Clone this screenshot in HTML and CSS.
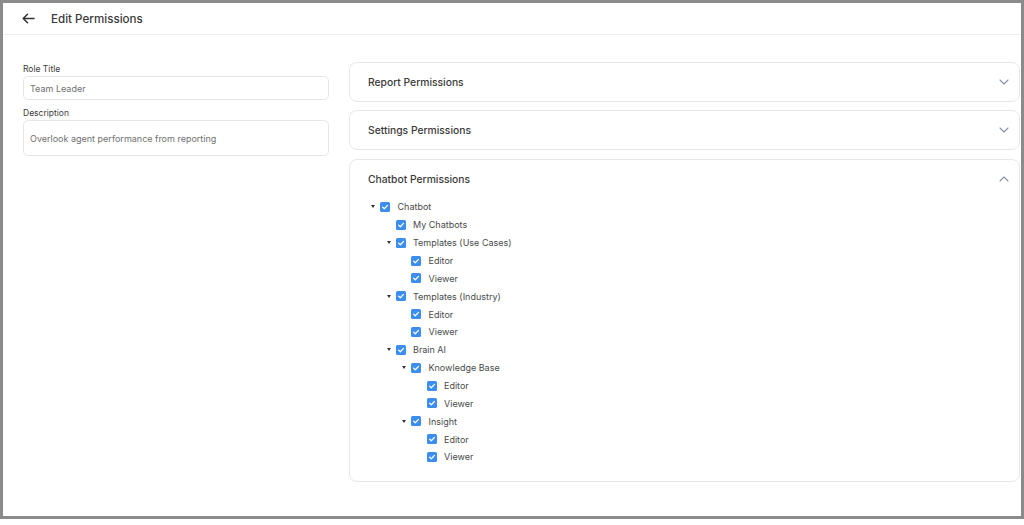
FILE: index.html
```html
<!DOCTYPE html>
<html>
<head>
  <meta charset="utf-8">
  <title>Edit Permissions</title>
  <link rel="stylesheet" href="styles.css">
</head>
<body>
  <div class="frame">
    <div class="header">
      <button class="back-button" aria-label="Back">
        <svg width="13" height="11" viewBox="0 0 13 11" fill="none" stroke="#333" stroke-width="1.5" stroke-linecap="round" stroke-linejoin="round">
          <path d="M12 5.5H1.5M5.5 1.2L1.2 5.5l4.3 4.3"/>
        </svg>
      </button>
      <h1>Edit Permissions</h1>
    </div>

    <div class="content">
      <div class="role-form">
        <label class="field-label">Role Title</label>
        <div class="field-input">Team Leader</div>
        <label class="field-label">Description</label>
        <div class="field-input field-textarea">Overlook agent performance from reporting</div>
      </div>

      <div class="permission-list">
        <div class="perm-card">
          <div class="perm-header">
            <span>Report Permissions</span>
            <svg class="chevron" width="10" height="6" viewBox="0 0 10 6"><path d="M1 1l4 4 4-4"/></svg>
          </div>
        </div>
        <div class="perm-card">
          <div class="perm-header">
            <span>Settings Permissions</span>
            <svg class="chevron" width="10" height="6" viewBox="0 0 10 6"><path d="M1 1l4 4 4-4"/></svg>
          </div>
        </div>
        <div class="perm-card open">
          <div class="perm-header">
            <span>Chatbot Permissions</span>
            <svg class="chevron" width="10" height="6" viewBox="0 0 10 6"><path d="M1 5l4-4 4 4"/></svg>
          </div>
          <ul class="tree" id="tree"></ul>
        </div>
      </div>
    </div>
  </div>

  <script>
    const nodes = [
      ['Chatbot', 0, true],
      ['My Chatbots', 1, false],
      ['Templates (Use Cases)', 1, true],
      ['Editor', 2, false],
      ['Viewer', 2, false],
      ['Templates (Industry)', 1, true],
      ['Editor', 2, false],
      ['Viewer', 2, false],
      ['Brain AI', 1, true],
      ['Knowledge Base', 2, true],
      ['Editor', 3, false],
      ['Viewer', 3, false],
      ['Insight', 2, true],
      ['Editor', 3, false],
      ['Viewer', 3, false]
    ];

    const tree = document.getElementById('tree');
    nodes.forEach(([label, level, hasChildren]) => {
      const li = document.createElement('li');
      li.className = 'tree-row level-' + level;
      li.innerHTML = `
        <span class="caret${hasChildren ? '' : ' empty'}"></span>
        <span class="checkbox">
          <svg width="10" height="10" viewBox="0 0 10 10"><path d="M2.6 5.1l1.7 1.6 3.2-3.3"/></svg>
        </span>
        <span class="tree-label">${label}</span>
      `;
      tree.appendChild(li);
    });
  </script>
</body>
</html>
```

FILE: styles.css
```css
* {
  box-sizing: border-box;
}
body {
  margin: 0;
  background: #fff;
  font-family: Inter, "Noto Sans", sans-serif;
  color: #333;
}
.frame {
  width: 1024px;
  height: 519px;
  border: 3px solid #8b8b8b;
  background: #fff;
}
.header {
  display: flex;
  align-items: center;
  height: 32px;
  border-bottom: 1px solid #efefef;
  padding-left: 19px;
}
.back-button {
  display: flex;
  background: none;
  border: none;
  padding: 0;
  margin-right: 16px;
  cursor: pointer;
}
h1 {
  margin: 0;
  font-size: 11.6px;
  font-weight: 500;
  color: #3a3a3a;
}
.content {
  display: flex;
  gap: 20px;
  padding: 27px 1px 0 20px;
}
.role-form {
  width: 306px;
  display: flex;
  flex-direction: column;
}
.field-label {
  font-size: 8.5px;
  font-weight: 400;
  color: #3c3c3c;
  line-height: 12px;
  margin-top: 1px;
  margin-bottom: 1px;
}
.field-input {
  height: 24px;
  border: 1px solid #e3e5e8;
  border-radius: 5px;
  padding: 0 6px;
  font-size: 9px;
  color: #707070;
  display: flex;
  align-items: center;
  margin-bottom: 6px;
}
.field-textarea {
  height: 36px;
}
.permission-list {
  flex: 1;
  display: flex;
  flex-direction: column;
  gap: 8px;
}
.perm-card {
  border: 1px solid #e6e7ea;
  border-radius: 8px;
}
.perm-card.open {
  margin-top: 1px;
  padding-bottom: 15px;
}
.perm-header {
  height: 38px;
  display: flex;
  align-items: center;
  justify-content: space-between;
  padding: 0 10px 0 18px;
  font-size: 10.3px;
  font-weight: 500;
  color: #3a3a3a;
}
.chevron path {
  fill: none;
  stroke: #8a93a3;
  stroke-width: 1.1;
  stroke-linecap: round;
  stroke-linejoin: round;
}
.tree {
  list-style: none;
  margin: 0;
  padding: 0 0 0 21px;
}
.tree-row {
  display: flex;
  align-items: center;
  height: 17.86px;
  font-size: 9px;
  color: #4a4a4a;
}
.level-1 { padding-left: 15.5px; }
.level-2 { padding-left: 31px; }
.level-3 { padding-left: 46.5px; }
.caret {
  width: 9px;
  height: 3px;
  position: relative;
}
.caret::before {
  content: '';
  position: absolute;
  left: 0;
  top: 0;
  border-left: 2.5px solid transparent;
  border-right: 2.5px solid transparent;
  border-top: 3px solid #333;
}
.caret.empty::before {
  display: none;
}
.checkbox {
  width: 10px;
  height: 10px;
  border-radius: 1.5px;
  background: #3b8eef;
  display: flex;
  margin-right: 7.5px;
}
.checkbox path {
  fill: none;
  stroke: #fff;
  stroke-width: 1.3;
  stroke-linecap: round;
  stroke-linejoin: round;
}
.tree-label {
  white-space: nowrap;
}
```
